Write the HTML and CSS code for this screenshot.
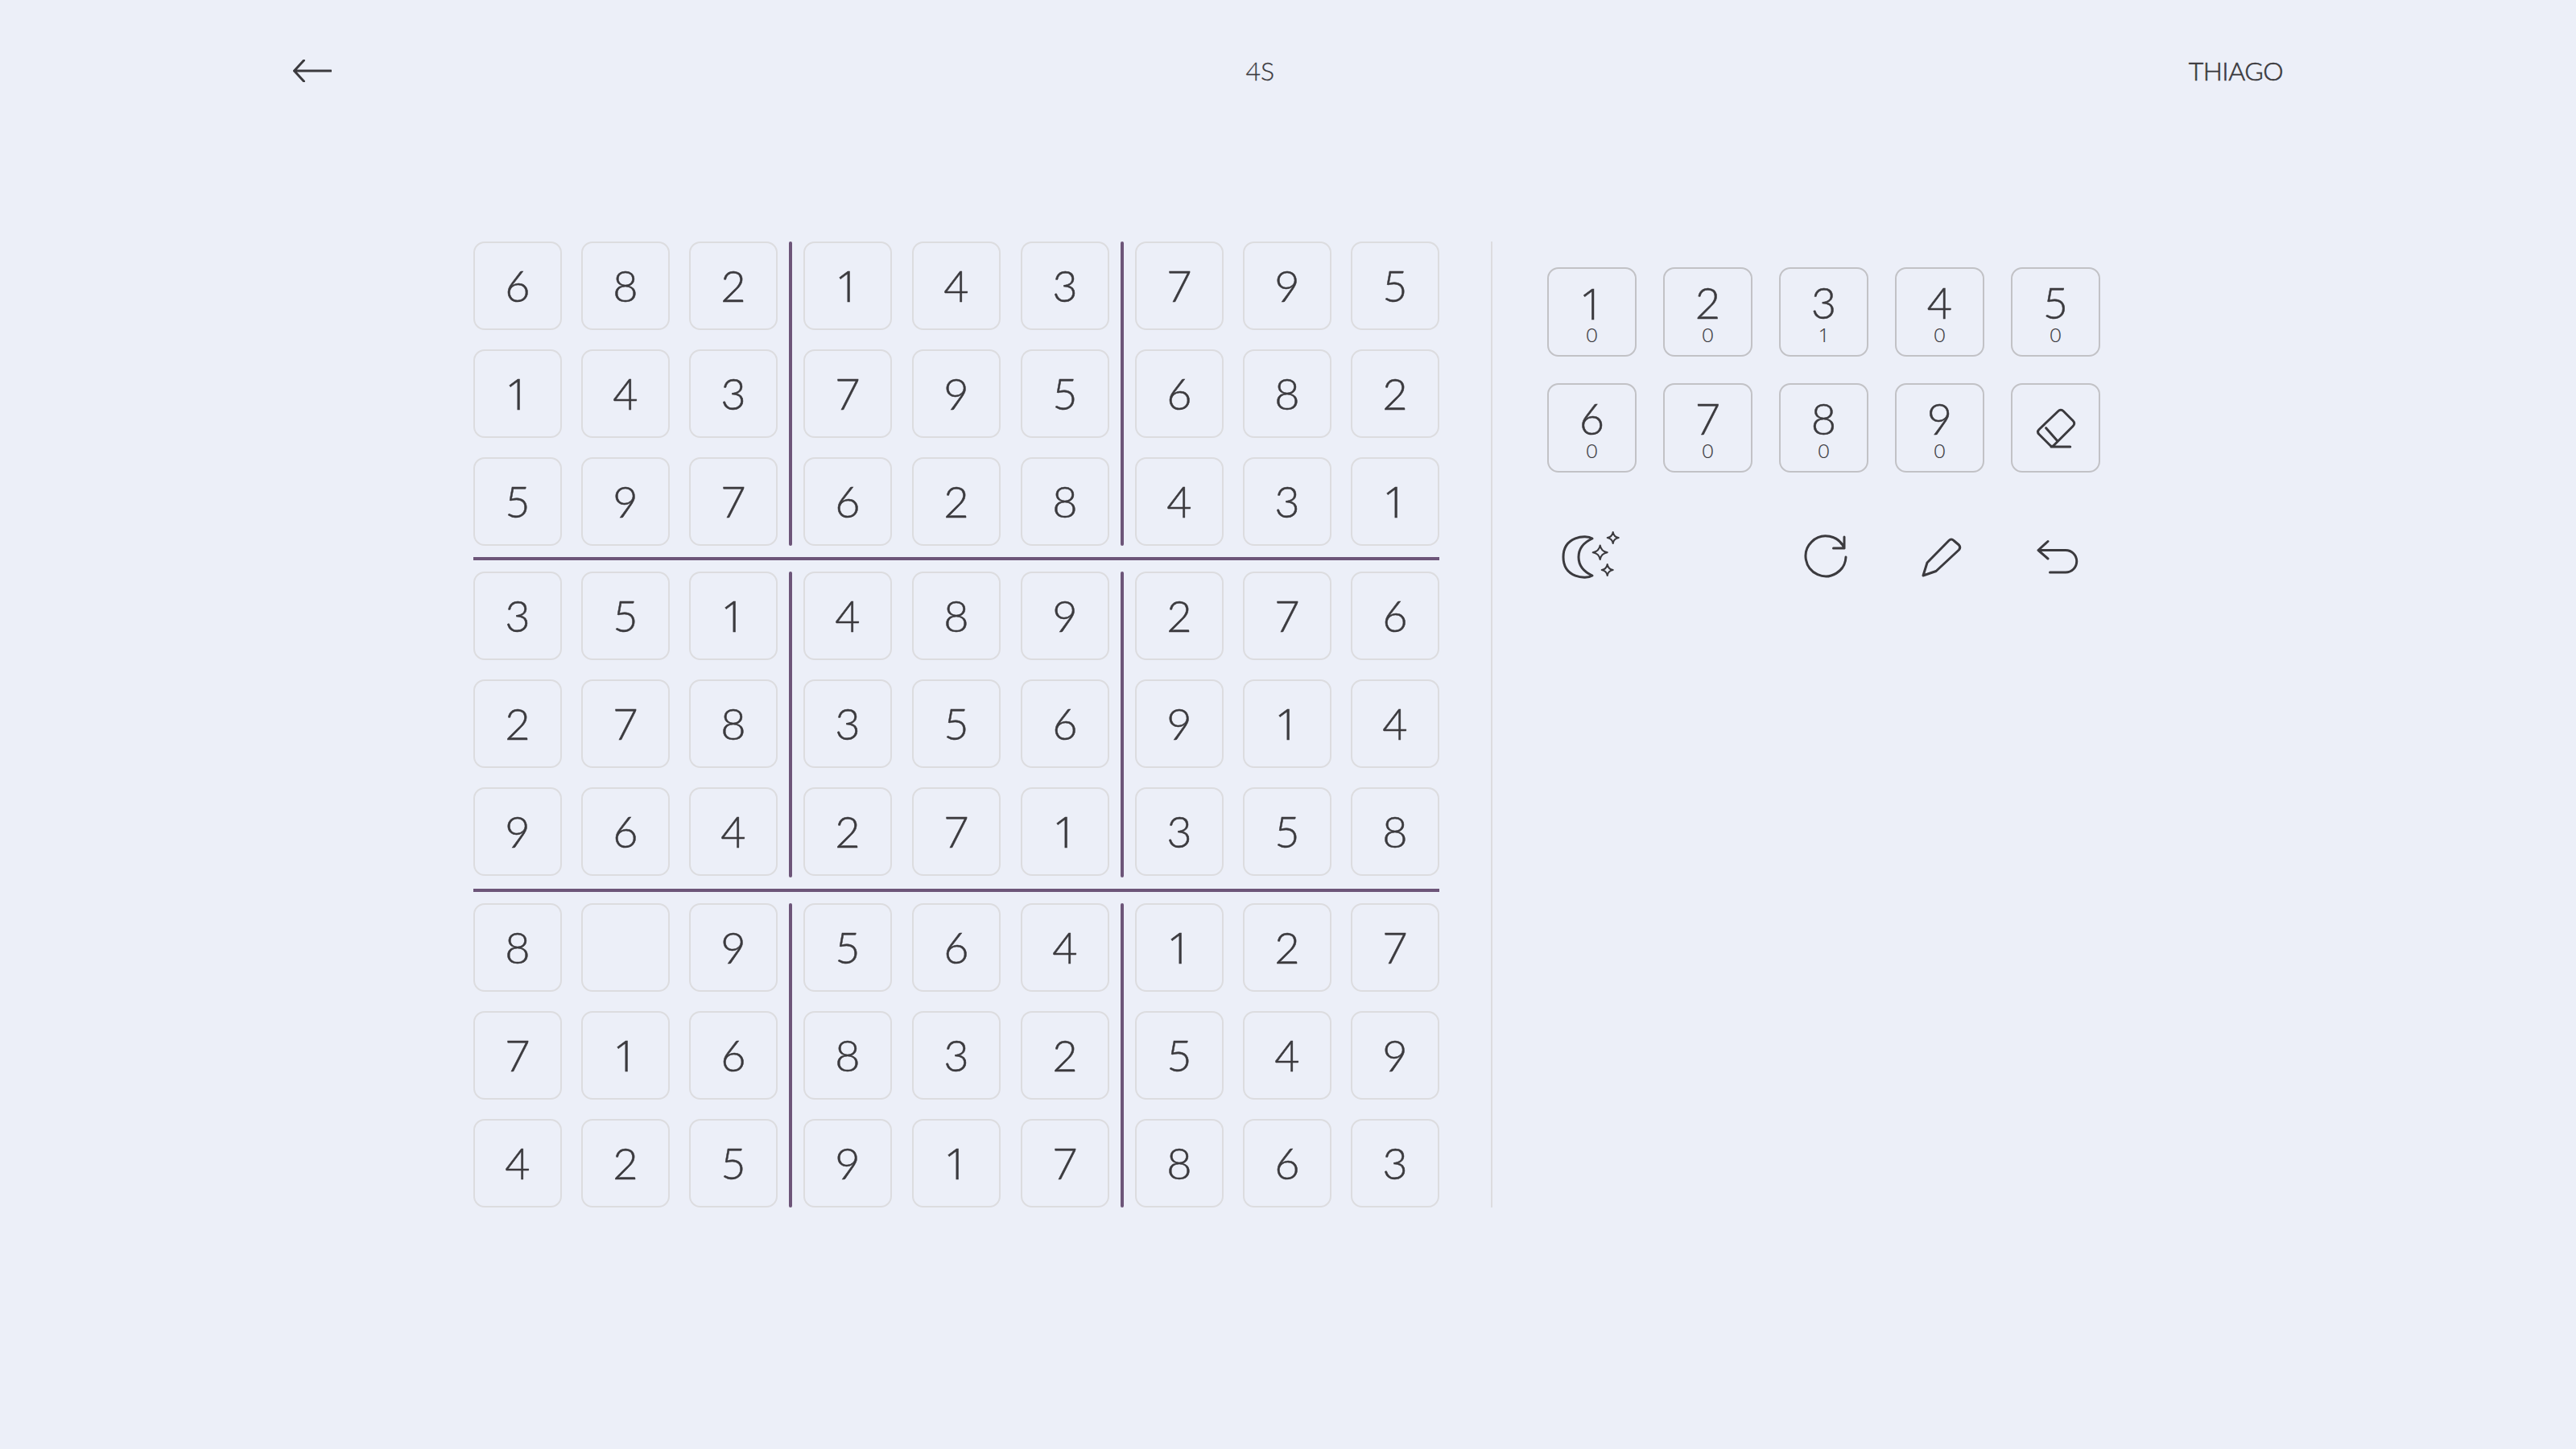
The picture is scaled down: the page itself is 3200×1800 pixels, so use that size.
FILE: index.html
```html
<!DOCTYPE html>
<html lang="en">
<head>
	<meta charset="UTF-8">
	<title>Sudoku</title>
	<link rel="stylesheet" href="styles.css">
</head>
<body>
	<header class="top">
		<a href="#" class="back">
			<svg class="back-icon" viewBox="0 0 48 28"><path d="M47 14H1.500M13.500 1L1.500 14L13.500 27"/></svg>
		</a>
		<span class="timer">4S</span>
		<span class="player">THIAGO</span>
	</header>
	<main class="game">
		<section class="board">
			<div class="band">
				<div class="block">
					<div class="cell">6</div><div class="cell">8</div><div class="cell">2</div>
					<div class="cell one">1</div><div class="cell">4</div><div class="cell">3</div>
					<div class="cell">5</div><div class="cell">9</div><div class="cell">7</div>
				</div>
				<span class="vbar"></span>
				<div class="block">
					<div class="cell one">1</div><div class="cell">4</div><div class="cell">3</div>
					<div class="cell">7</div><div class="cell">9</div><div class="cell">5</div>
					<div class="cell">6</div><div class="cell">2</div><div class="cell">8</div>
				</div>
				<span class="vbar"></span>
				<div class="block">
					<div class="cell">7</div><div class="cell">9</div><div class="cell">5</div>
					<div class="cell">6</div><div class="cell">8</div><div class="cell">2</div>
					<div class="cell">4</div><div class="cell">3</div><div class="cell one">1</div>
				</div>
			</div>
			<hr class="hbar">
			<div class="band band-mid">
				<div class="block">
					<div class="cell">3</div><div class="cell">5</div><div class="cell one">1</div>
					<div class="cell">2</div><div class="cell">7</div><div class="cell">8</div>
					<div class="cell">9</div><div class="cell">6</div><div class="cell">4</div>
				</div>
				<span class="vbar"></span>
				<div class="block">
					<div class="cell">4</div><div class="cell">8</div><div class="cell">9</div>
					<div class="cell">3</div><div class="cell">5</div><div class="cell">6</div>
					<div class="cell">2</div><div class="cell">7</div><div class="cell one">1</div>
				</div>
				<span class="vbar"></span>
				<div class="block">
					<div class="cell">2</div><div class="cell">7</div><div class="cell">6</div>
					<div class="cell">9</div><div class="cell one">1</div><div class="cell">4</div>
					<div class="cell">3</div><div class="cell">5</div><div class="cell">8</div>
				</div>
			</div>
			<hr class="hbar">
			<div class="band">
				<div class="block">
					<div class="cell">8</div><div class="cell"></div><div class="cell">9</div>
					<div class="cell">7</div><div class="cell one">1</div><div class="cell">6</div>
					<div class="cell">4</div><div class="cell">2</div><div class="cell">5</div>
				</div>
				<span class="vbar"></span>
				<div class="block">
					<div class="cell">5</div><div class="cell">6</div><div class="cell">4</div>
					<div class="cell">8</div><div class="cell">3</div><div class="cell">2</div>
					<div class="cell">9</div><div class="cell one">1</div><div class="cell">7</div>
				</div>
				<span class="vbar"></span>
				<div class="block">
					<div class="cell one">1</div><div class="cell">2</div><div class="cell">7</div>
					<div class="cell">5</div><div class="cell">4</div><div class="cell">9</div>
					<div class="cell">8</div><div class="cell">6</div><div class="cell">3</div>
				</div>
			</div>
		</section>
		<aside class="panel">
			<div class="pad">
				<button class="key"><span class="key-num one">1</span><span class="key-count">0</span></button>
				<button class="key"><span class="key-num">2</span><span class="key-count">0</span></button>
				<button class="key"><span class="key-num">3</span><span class="key-count one">1</span></button>
				<button class="key"><span class="key-num">4</span><span class="key-count">0</span></button>
				<button class="key"><span class="key-num">5</span><span class="key-count">0</span></button>
				<button class="key"><span class="key-num">6</span><span class="key-count">0</span></button>
				<button class="key"><span class="key-num">7</span><span class="key-count">0</span></button>
				<button class="key"><span class="key-num">8</span><span class="key-count">0</span></button>
				<button class="key"><span class="key-num">9</span><span class="key-count">0</span></button>
				<button class="key">
					<svg class="icon" viewBox="0 0 60 60"><path d="M32.500 9Q36 5.500 39.500 9L51 20.500Q54.500 24 51 27.500L27 51.500Q25 53.500 23 51.500L9 37.500Q6 34.500 9 31.500ZM17.700 29.700L32 46M24 53H47.700"/></svg>
				</button>
			</div>
			<div class="actions">
				<div class="action">
					<svg class="icon-moon" viewBox="-1 0 76 60">
						<path d="M37 7C29 2 1 4 1 30C1 56 29 58 37 53C26 48 20 40 20 30C20 20 26 12 37 7Z"/>
						<path class="star" d="M62.700 -1Q63.700 5 69.700 6Q63.700 7 62.700 13Q61.700 7 55.700 6Q61.700 5 62.700 -1Z"/>
						<path class="star" d="M46.700 15.500Q48 23 55.700 24.300Q48 25.600 46.700 33Q45.400 25.600 37.700 24.300Q45.400 23 46.700 15.500Z"/>
						<path class="star" d="M55.700 39Q56.700 45 62.700 46Q56.700 47 55.700 53Q54.700 47 48.700 46Q54.700 45 55.700 39Z"/>
					</svg>
				</div>
				<div class="action"></div>
				<div class="action">
					<svg class="icon" viewBox="-2 0 60 60"><path d="M55 30A25 25 0 1 1 53 19M53 5V19H39.500"/></svg>
				</div>
				<div class="action">
					<svg class="icon" viewBox="0 0 60 60"><path d="M9 53L14 37L41 9.500Q44 6.500 47 9.500L53.500 15Q56 18 53.500 21L25 47.500Z"/></svg>
				</div>
				<div class="action">
					<svg class="icon" viewBox="0 0 60 60"><path d="M20 10.500L8 21.500L20 32M8 21.500H42A13.750 13.750 0 0 1 42 49H22.500"/></svg>
				</div>
			</div>
		</aside>
	</main>
</body>
</html>
```

FILE: styles.css
```css
* {
	padding: 0;
	margin: 0;
	box-sizing: border-box;
}
body {
	background: #eceff8;
	color: #3b3a3e;
	font-family: "Lato", "Liberation Sans", sans-serif;
	font-weight: 300;
}
.top {
	display: flex;
	justify-content: space-between;
	align-items: center;
	height: 176px;
	padding: 0 364px;
	font-size: 32px;
	line-height: 32px;
}
.back {
	display: block;
	height: 28px;
}
.back-icon {
	display: block;
	width: 48px;
	height: 28px;
	fill: none;
	stroke: #3b3a3e;
	stroke-width: 3;
	stroke-linecap: round;
	stroke-linejoin: round;
}
.timer {
	-webkit-text-stroke: 0.3px #3b3a3e;
}
.player {
	letter-spacing: -0.5px;
	-webkit-text-stroke: 0.6px #3b3a3e;
}
.game {
	display: flex;
	margin-top: 124px;
	padding-left: 588px;
}
.board {
	width: 1200px;
	height: 1200px;
	display: flex;
	flex-direction: column;
	gap: 14px;
}
.band {
	height: 378px;
	display: flex;
	gap: 14px;
}
.band-mid {
	height: 380px;
}
.block {
	width: 378px;
	display: grid;
	grid-template-columns: repeat(3, 110px);
	grid-template-rows: repeat(3, 110px);
	justify-content: space-between;
	row-gap: 24px;
}
.block:nth-child(3) {
	width: 380px;
}
.cell {
	display: flex;
	align-items: center;
	justify-content: center;
	border: 2px solid #dcdcdf;
	border-radius: 14px;
	font-size: 54px;
	padding-bottom: 2px;
	-webkit-text-stroke: 0.5px #3b3a3e;
}
.one {
	font-family: "Open Sans", sans-serif;
}
.vbar {
	width: 4px;
	border-radius: 2px;
	background: #6d5579;
}
.hbar {
	height: 4px;
	border: 0;
	background: #6d5579;
}
.panel {
	margin-left: 64px;
	padding: 32px 0 0 68px;
	width: 760px;
	border-left: 2px solid #dcdcdf;
}
.pad {
	display: grid;
	grid-template-columns: repeat(5, 111px);
	grid-auto-rows: 111px;
	column-gap: 33px;
	row-gap: 33px;
}
.key {
	display: flex;
	flex-direction: column;
	align-items: center;
	justify-content: center;
	border: 2px solid #c2c2c6;
	border-radius: 14px;
	background: none;
	color: inherit;
	font-family: inherit;
	font-weight: 300;
}
.key-num {
	font-size: 54px;
	line-height: 56px;
	-webkit-text-stroke: 0.5px #3b3a3e;
}
.key-count {
	font-size: 24px;
	line-height: 24px;
	-webkit-text-stroke: 0.2px #3b3a3e;
}
.icon, .icon-moon {
	display: block;
	width: 60px;
	height: 60px;
	fill: none;
	stroke: #3b3a3e;
	stroke-width: 3;
	stroke-linecap: round;
	stroke-linejoin: round;
}
.icon-moon {
	width: 76px;
	overflow: visible;
}
.star {
	stroke-width: 2;
}
.actions {
	display: grid;
	grid-template-columns: repeat(5, 111px);
	column-gap: 33px;
	margin-top: 75px;
}
.action {
	display: flex;
	justify-content: center;
	height: 60px;
}
```
